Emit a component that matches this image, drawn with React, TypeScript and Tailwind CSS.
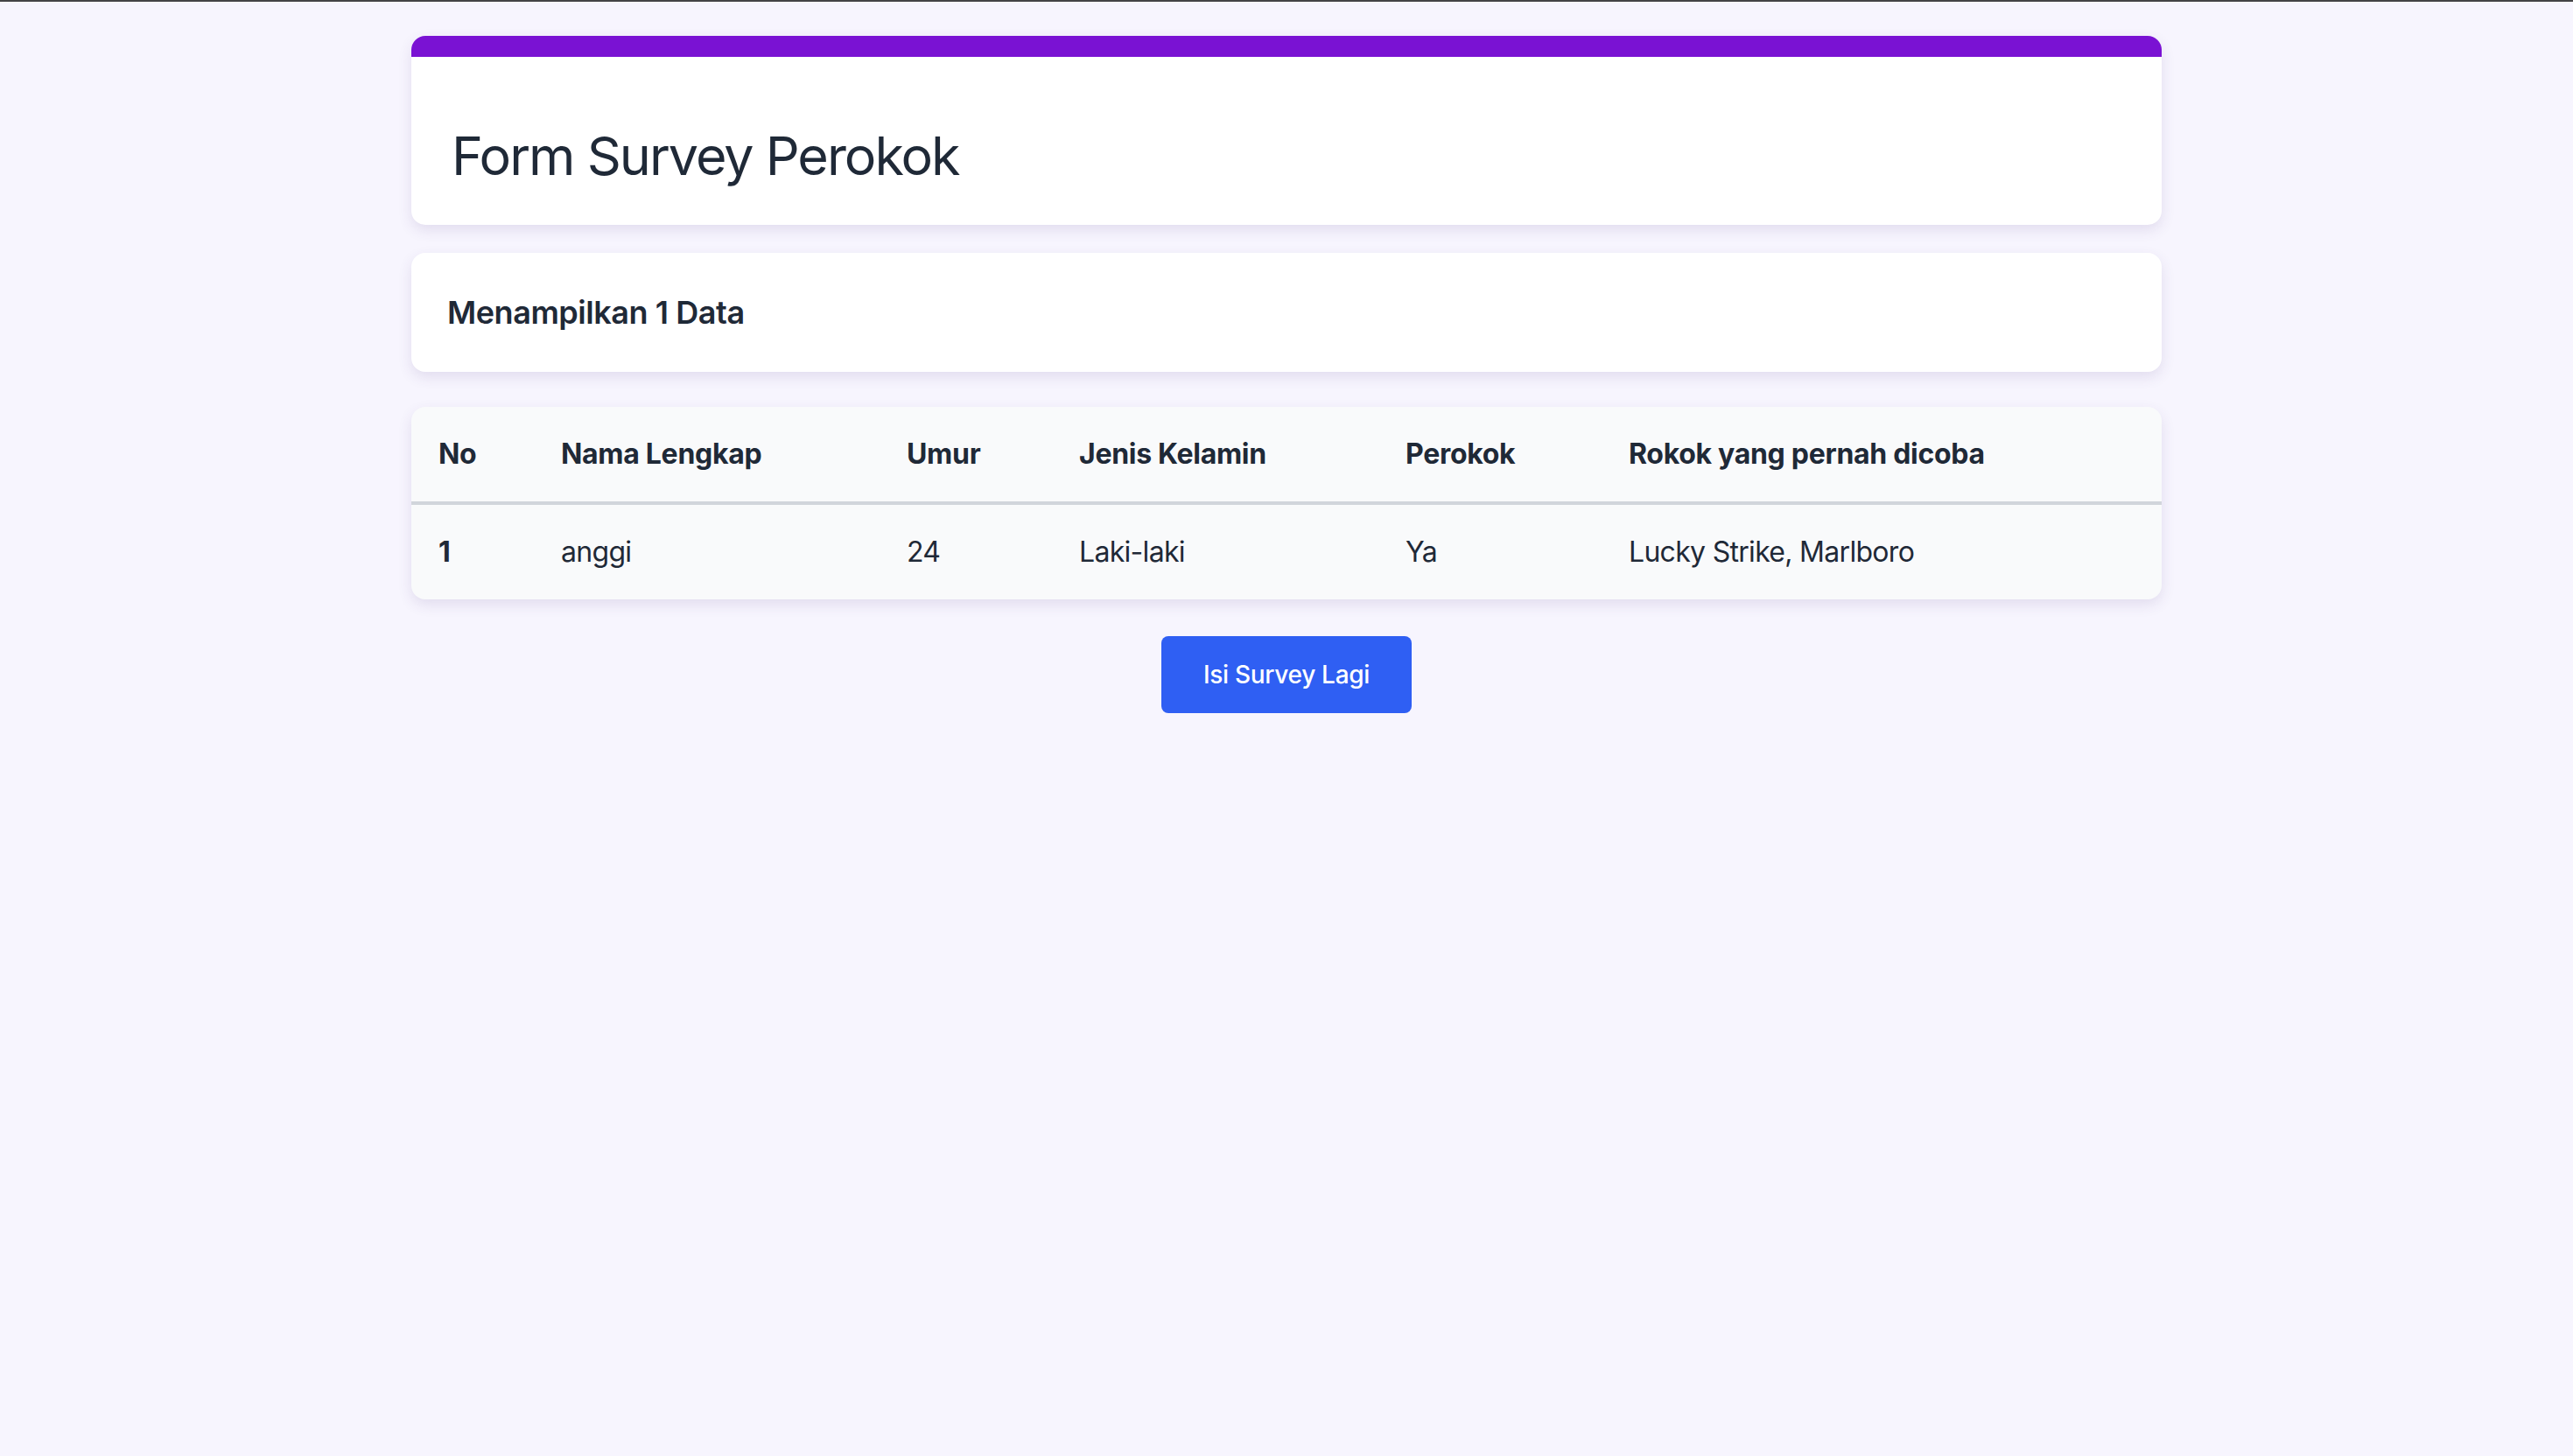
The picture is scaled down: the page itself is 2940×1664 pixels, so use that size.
export default function App() {
  const cols = [
    { label: "No", w: "w-[140px]" },
    { label: "Nama Lengkap", w: "w-[395px]" },
    { label: "Umur", w: "w-[197px]" },
    { label: "Jenis Kelamin", w: "w-[373px]" },
    { label: "Perokok", w: "w-[255px]" },
    { label: "Rokok yang pernah dicoba", w: "w-[640px]" },
  ];

  const rows = [
    {
      no: 1,
      nama: "anggi",
      umur: 24,
      jk: "Laki-laki",
      perokok: "Ya",
      rokok: "Lucky Strike, Marlboro",
    },
  ];

  return (
    <div className="min-h-screen bg-[#f7f5fe] font-['Inter','Noto_Sans',sans-serif] text-[#1f2937]">
      <div className="h-[2px] bg-[#434346]" />

      <div className="mx-auto w-[2000px] pt-[39px] pb-[80px]">
        {/* Title card */}
        <div className="overflow-hidden rounded-[16px] bg-white shadow-[0_6px_16px_rgba(70,50,120,0.12)]">
          <div className="h-[24px] bg-[#7a12d3]" />
          <h1 className="px-[46px] pt-[73px] pb-[39px] text-[61px] font-normal leading-[80px] tracking-[-2px]">
            Form Survey Perokok
          </h1>
        </div>

        {/* Count card */}
        <div className="mt-[32px] rounded-[16px] bg-white px-[41px] py-[40px] shadow-[0_6px_16px_rgba(70,50,120,0.12)]">
          <h2 className="text-[36px] font-semibold leading-[56px] tracking-[-0.45px]">
            Menampilkan {rows.length} Data
          </h2>
        </div>

        {/* Table */}
        <div className="mt-[40px] overflow-hidden rounded-[16px] bg-[#f9fafb] shadow-[0_6px_16px_rgba(70,50,120,0.12)]">
          <table className="w-full table-fixed border-collapse">
            <thead>
              <tr>
                {cols.map((c) => (
                  <th
                    key={c.label}
                    className={`${c.w} border-b-[4px] border-[#d1d5db] px-[31px] py-[30px] text-left text-[32px] font-bold leading-[48px] tracking-[-0.3px]`}
                  >
                    {c.label}
                  </th>
                ))}
              </tr>
            </thead>
            <tbody>
              {rows.map((r) => (
                <tr key={r.no}>
                  <td className="px-[31px] py-[30px] text-[32px] font-bold leading-[48px]">
                    {r.no}
                  </td>
                  <td className="px-[31px] py-[30px] text-[32px] leading-[48px] tracking-[-0.7px]">
                    {r.nama}
                  </td>
                  <td className="px-[31px] py-[30px] text-[32px] leading-[48px] tracking-[-0.7px]">
                    {r.umur}
                  </td>
                  <td className="px-[31px] py-[30px] text-[32px] leading-[48px] tracking-[-0.7px]">
                    {r.jk}
                  </td>
                  <td className="px-[31px] py-[30px] text-[32px] leading-[48px] tracking-[-0.7px]">
                    {r.perokok}
                  </td>
                  <td className="px-[31px] py-[30px] text-[32px] leading-[48px] tracking-[-0.7px]">
                    {r.rokok}
                  </td>
                </tr>
              ))}
            </tbody>
          </table>
        </div>

        <div className="mt-[42px] flex justify-center">
          <button className="rounded-[8px] bg-[#2f5ff3] px-[48px] py-[24px] text-[28px] font-medium leading-[40px] tracking-[-0.3px] text-white">
            Isi Survey Lagi
          </button>
        </div>
      </div>
    </div>
  );
}
